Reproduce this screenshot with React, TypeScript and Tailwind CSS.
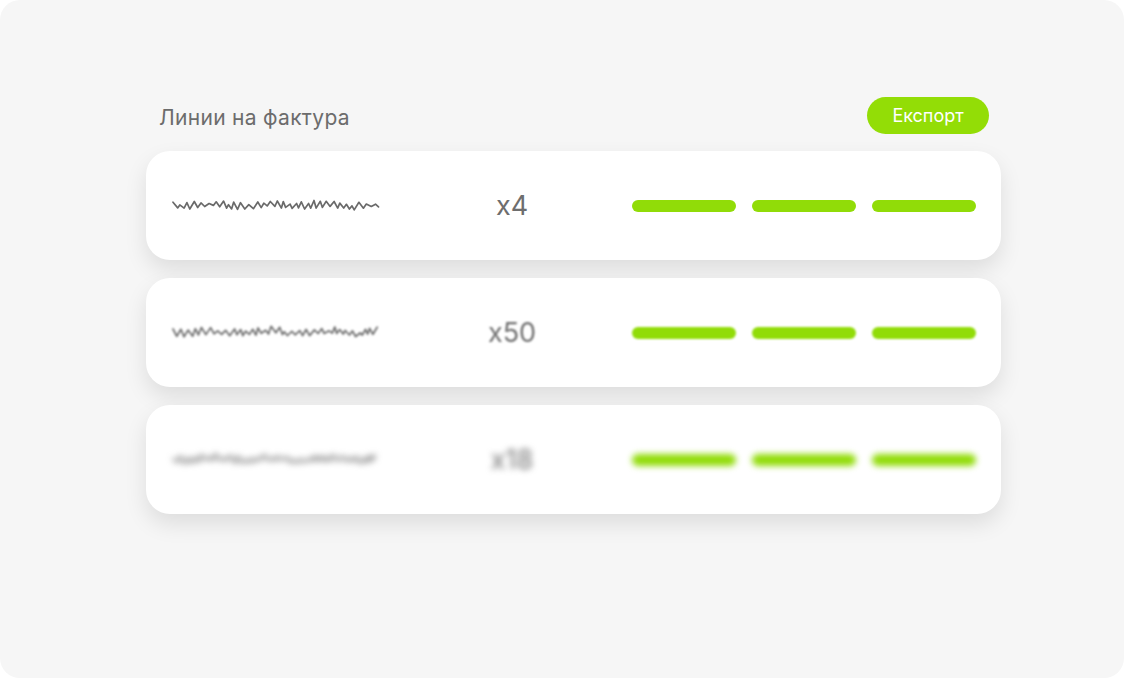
import React from "react";

function wavePoints(seed: number) {
  let s = seed;
  const rnd = () => {
    s = (s * 9301 + 49297) % 233280;
    return s / 233280;
  };
  const pts: string[] = [];
  let x = 1;
  let up = true;
  while (x < 207) {
    const amp = 1 + rnd() * 4.5;
    const base = 9 + Math.sin(x / 9) * 1.2;
    const y = base + (up ? -amp : amp * 0.5);
    pts.push(`${x.toFixed(1)},${y.toFixed(1)}`);
    x += 1.8 + rnd() * 3.2;
    up = !up;
  }
  return pts.join(" ");
}

function Wave({ seed }: { seed: number }) {
  return (
    <svg width="210" height="18" viewBox="0 0 210 18" className="shrink-0">
      <polyline
        points={wavePoints(seed)}
        fill="none"
        stroke="#6a6a6a"
        strokeWidth="1.7"
        strokeLinejoin="round"
        strokeLinecap="round"
      />
    </svg>
  );
}

function Row({ seed, qty, blur }: { seed: number; qty: string; blur: string }) {
  return (
    <div className="h-[109px] rounded-[24px] bg-white shadow-[0_10px_22px_rgba(0,0,0,0.1)] flex items-center pl-[26px] pr-[25px]">
      <div className={`flex items-center w-full ${blur}`}>
        <Wave seed={seed} />
        <div className="w-[260px] pl-[10px] text-center text-[27px] text-[#6e6e6e] leading-none">{qty}</div>
        <div className="ml-auto flex gap-[16px]">
          <div className="w-[104px] h-[12px] rounded-full bg-[#91dc08]" />
          <div className="w-[104px] h-[12px] rounded-full bg-[#91dc08]" />
          <div className="w-[104px] h-[12px] rounded-full bg-[#91dc08]" />
        </div>
      </div>
    </div>
  );
}

export default function App() {
  return (
    <div className="w-[1124px] h-[678px] bg-white font-['Inter','Liberation_Sans',sans-serif]">
      <div className="w-full h-full rounded-[20px] bg-[#f6f6f6] pt-[97px] pl-[146px] pr-[123px]">
        <div className="flex items-center justify-between h-[37px] pl-[13px] pr-[12px]">
          <div className="text-[21px] text-[#6c6c6c] mt-[5px] tracking-[0.3px]">Линии на фактура</div>
          <button className="h-[37px] w-[122px] rounded-full bg-[#93dd06] text-white text-[18px]">
            Експорт
          </button>
        </div>
        <div className="mt-[17px] flex flex-col gap-[18px]">
          <Row seed={11} qty="x4" blur="" />
          <Row seed={37} qty="x50" blur="blur-[1.2px]" />
          <Row seed={73} qty="x18" blur="blur-[3px]" />
        </div>
      </div>
    </div>
  );
}
